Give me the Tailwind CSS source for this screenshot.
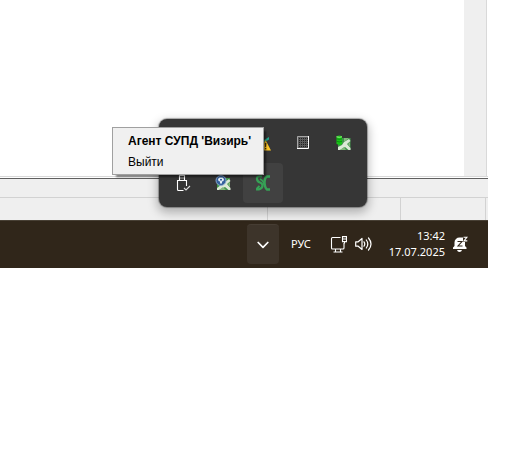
<!DOCTYPE html>
<html lang="ru">
<head>
    <meta charset="UTF-8">
    <meta name="viewport" content="width=device-width, initial-scale=1.0">
    <title>Агент СУПД</title>
    <script src="https://cdn.jsdelivr.net/npm/@tailwindcss/browser@4"></script>
</head>
<body class="bg-white min-h-screen">
    <div class="relative mr-[43px]">
        <!-- Window behind the tray -->
        <main class="flex h-44 pr-px bg-white">
            <div class="flex-1 bg-white"></div>
            <div class="w-[23px] bg-[#efefef] border-r border-[#d9d9d9]"></div>
        </main>
        <div class="h-[3px] bg-white border-t border-t-[#d8d8d8] border-b border-b-[#606060]"></div>
        <div class="h-[18px] bg-[#efefef]"></div>
        <footer class="flex h-[23px] bg-[#efefef] border-t border-[#d2d2d2] pr-0.5">
            <div class="flex-1 border-r border-[#d2d2d2]"></div>
            <div class="w-[133px] border-r border-[#d2d2d2]"></div>
            <div class="w-[85px] border-r border-[#d2d2d2]"></div>
        </footer>

        <!-- Taskbar -->
        <nav class="flex items-center justify-end h-12 pr-5 pb-px bg-[#30261a] border-t border-[#484035] text-white text-[11px] leading-4 [font-family:Noto_Sans,Open_Sans,sans-serif]">
            <button aria-label="Скрытые значки" class="flex items-center justify-center w-8 h-10 mr-[11px] rounded bg-[#3d342a] border-t border-[#463d33]">
                <svg class="w-3 h-3" viewBox="0 0 12 12" fill="none" stroke="white" stroke-width="1.7" stroke-linecap="round" stroke-linejoin="round"><path d="M1.2 3.500 6 8.300l4.800-4.800"/></svg>
            </button>
            <button class="w-[22px] mr-[18px]">РУС</button>
            <button aria-label="Сеть и звук" class="flex items-center gap-2 mr-[15px]">
                <svg class="w-[17px] h-[17px]" viewBox="0 0 17 17" fill="none" stroke="white" stroke-width="1.1">
                    <path d="M10.500 1.500h-8q-1 0-1 1v9.500q0 1 1 1h10.500q1 0 1-1V7"/>
                    <path d="M5.500 13v3M10.500 13v3M3.500 16h9"/>
                    <path d="M12.500 .6h4v5h-4zM12.500 3h4M14.500 5.500v2"/>
                </svg>
                <svg class="w-[17px] h-4" viewBox="0 0 17 16" fill="none" stroke="white" stroke-width="1.2" stroke-linecap="round" stroke-linejoin="round">
                    <path d="M.7 5.800h2.500L7 2.500v11L3.200 10.200H.7z"/>
                    <path d="M9 5.800q1.500 2.200 0 4.400M11.300 4q3 4 0 8M13.500 2q5 6 0 12"/>
                </svg>
            </button>
            <button class="w-[58px] text-right mr-[7px]">13:42<br>17.07.2025</button>
            <button aria-label="Уведомления">
                <svg class="w-4 h-4" viewBox="0 0 16 16">
                    <path d="M1 13v-1.500l1.500-1.500V6.500a5 5 0 0 1 5-5H11v4.500h2V10l1.500 1.500V13zM5 14h5q-.5 1.900-2.500 1.900T5 14" fill="white"/>
                    <path d="M11 .5h5v5.300h-5z" fill="#30261a"/>
                    <path d="M11.500 1.200H15l-3 3.700h3.300" fill="none" stroke="white" stroke-width="1.100"/>
                    <path d="M5.500 5.500h4.500L6 10h4.500" fill="none" stroke="#30261a" stroke-width="1.100"/>
                </svg>
            </button>
        </nav>

        <!-- Hidden icons flyout -->
        <div class="absolute top-[119px] right-[121px] grid grid-cols-5 p-1 rounded-lg bg-[#363636] shadow-[0_4px_10px_2px_rgba(0,0,0,0.25),0_0_1px_1px_rgba(0,0,0,0.3)]">
            <div class="size-10"></div>
            <div class="size-10"></div>
            <button aria-label="Предупреждение" class="flex items-center justify-center size-10 rounded">
                <svg class="w-4 h-4" viewBox="0 0 16 16">
                    <path d="M5 3 9 5l5-3v2.500L10 7H7z" fill="#21a58b"/>
                    <path d="M10.500 5 16 15.500H5z" fill="#ffc928"/>
                    <path d="M9.800 8h1.600l-.3 4h-1zM10 13h1.300v1.300H10z" fill="#4a3510"/>
                </svg>
            </button>
            <button aria-label="Сетка" class="flex items-center justify-center size-10 rounded">
                <svg class="w-3.5 h-3.5" viewBox="0 0 14 14">
                    <path d="M1 0h12v13H1z" fill="#5c5c5c"/>
                    <path d="M3.500 2v10M5.500 2v10M7.500 2v10M9.500 2v10M11.500 2v10" stroke="#222" stroke-dasharray="1 1"/>
                    <path d="M1.500 13V.5H12" fill="none" stroke="#a5a5a5"/>
                    <path d="M1 12.500h11.500V0" fill="none" stroke="white"/>
                </svg>
            </button>
            <button aria-label="База данных" class="flex items-center justify-center size-10 rounded">
                <svg class="w-4 h-4" viewBox="0 0 16 16">
                    <path d="M3 3h12.500v12H3z" fill="#3f9449"/>
                    <path d="m3 12 4-2 2-3 5-3 1.500 2-3.500 3 3.500 4v2h-2L10 12l-5 3H3z" fill="#dce9d6"/>
                    <path d="M9 3h5L9 7zM5 15l4-3 2 3zM13 9l2-2v5z" fill="#84b67d"/>
                    <path d="M1.500 1.200q3-1.500 5.500 0V9q-2.500 1.500-5.500 0z" fill="#18c516"/>
                    <path d="M1.500 3.800q3 1.200 5.500 0M1.500 6.300q3 1.200 5.500 0" fill="none" stroke="#087b12" stroke-width=".7"/>
                    <path d="M1.500 1.800q3 1 5.500 0" fill="none" stroke="#a5f393" stroke-width=".9"/>
                </svg>
            </button>
            <button aria-label="Безопасное извлечение" class="flex items-center justify-center size-10 rounded">
                <svg class="w-4 h-4" viewBox="0 0 16 16" fill="none" stroke="white" stroke-width="1.100">
                    <path d="M4.500 5.500v-5h5v5M8.500 15.500h-5q-1 0-1-1v-9h9V11"/>
                    <path d="M6 2.500v1M8 2.500v1"/>
                    <path d="m9 13 2 2 4-4" stroke="#ddd"/>
                </svg>
            </button>
            <button aria-label="Сервер" class="flex items-center justify-center size-10 rounded">
                <svg class="w-4 h-4" viewBox="0 0 16 16">
                    <path d="M2 3h13v12H2z" fill="#3f9449"/>
                    <path d="m2 13 4-3 4-3 4-3 1.500 2-3.500 3 3.500 4v2h-2L10 12l-6 3H2z" fill="#dce9d6"/>
                    <path d="M4 15l4-3 3 3zM13 9l2-2v5z" fill="#84b67d"/>
                    <circle cx="6" cy="5.500" r="5" fill="#345f9b" stroke="#8eabd0" stroke-width=".9"/>
                    <path d="m3 4 1.500-1.500h3L9 4 8.500 6 7 6.500v2H5v-2L3.500 6z" fill="#e2edf5"/>
                    <path d="M5 4h2v1.500H5z" fill="#345f9b"/>
                </svg>
            </button>
            <button aria-label="Агент СУПД" class="flex items-center justify-center size-10 rounded bg-[#414141]">
                <svg class="w-4 h-4" viewBox="0 0 16 16" fill="none" stroke="#36a156">
                    <path d="M7 1.500Q1.500.5 2 4q.3 2.500 3 3.500t2.500 3.500Q7 14.500 1 14.500" stroke-width="2.200"/>
                    <path d="M15 1.500h-3Q9.500 2.500 9.500 8q.5 5 2.500 6.500h3" stroke-width="2.500"/>
                    <path d="M5 4Q9 6 9 10" stroke-width="1.500"/>
                    <path d="M4.500 11 1.500 14" stroke-width="2"/>
                </svg>
            </button>
        </div>

        <!-- Context menu of the agent icon -->
        <div role="menu" class="absolute top-[127px] right-56 flex flex-col w-[152px] h-12 pt-[3px] pl-[15px] bg-[#f0f0f0] border border-[#a0a0a0] text-black text-[12px] leading-[21px] [font-family:Liberation_Sans,Arial,sans-serif] whitespace-nowrap shadow-[3px_3px_2px_-1px_rgba(0,0,0,0.5)]">
            <button role="menuitem" class="text-left font-bold">Агент СУПД 'Визирь'</button>
            <button role="menuitem" class="text-left">Выйти</button>
        </div>
    </div>
</body>
</html>
